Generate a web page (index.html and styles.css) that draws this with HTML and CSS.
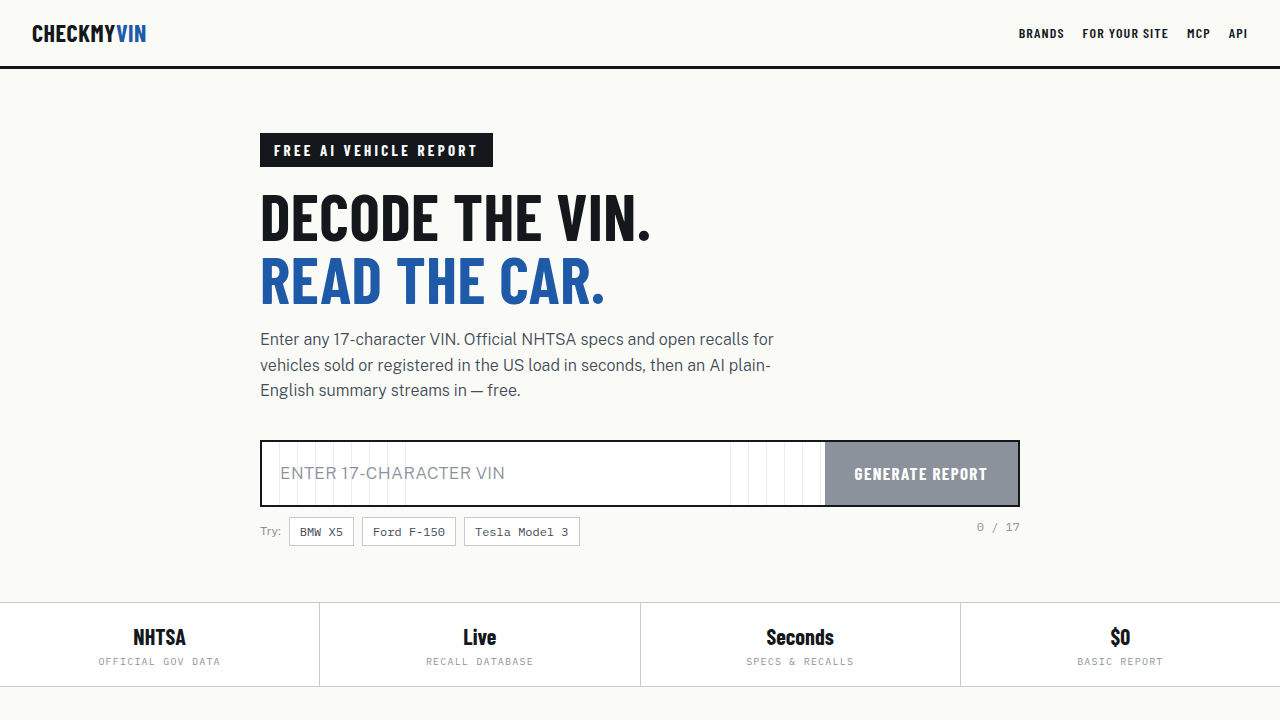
FILE: index.html
```html
<!DOCTYPE html>
<html lang="en">
<head>
    <meta charset="UTF-8">
    <meta name="viewport" content="width=device-width, initial-scale=1.0">
    <title>CheckMyVIN - Free AI Vehicle Report</title>
    <link rel="stylesheet" href="styles.css">
</head>
<body>
    <header class="site-header">
        <a class="logo" href="#">CHECKMY<span class="accent">VIN</span></a>
        <nav class="site-nav">
            <a href="#brands">Brands</a>
            <a href="#widget">For your site</a>
            <a href="#mcp">MCP</a>
            <a href="#api">API</a>
        </nav>
    </header>

    <main>
        <section class="hero">
            <div class="tag">Free AI Vehicle Report</div>
            <h1>Decode the VIN.<br><span class="accent">Read the car.</span></h1>
            <p class="lead">Enter any 17-character VIN. Official NHTSA specs and open recalls for vehicles sold or registered in the US load in seconds, then an AI plain-English summary streams in — free.</p>

            <form class="vin-form">
                <input class="vin-input" type="text" maxlength="17" placeholder="ENTER 17-CHARACTER VIN" aria-label="VIN" autocomplete="off" spellcheck="false">
                <button class="vin-submit" type="submit" disabled>Generate Report</button>
            </form>

            <div class="vin-meta">
                <div class="examples">
                    <span class="examples-label">Try:</span>
                    <button class="chip" type="button">BMW X5</button>
                    <button class="chip" type="button">Ford F-150</button>
                    <button class="chip" type="button">Tesla Model 3</button>
                </div>
                <div class="counter">0 / 17</div>
            </div>
        </section>

        <section class="stats">
            <div class="stat">
                <div class="stat-value">NHTSA</div>
                <div class="stat-label">Official gov data</div>
            </div>
            <div class="stat">
                <div class="stat-value">Live</div>
                <div class="stat-label">Recall database</div>
            </div>
            <div class="stat">
                <div class="stat-value">Seconds</div>
                <div class="stat-label">Specs &amp; recalls</div>
            </div>
            <div class="stat">
                <div class="stat-value">$0</div>
                <div class="stat-label">Basic report</div>
            </div>
        </section>
    </main>
</body>
</html>
```
FILE: styles.css
```css
:root {
    --ink: #14181c;
    --blue: #1e5aa8;
    --paper: #fafbf7;
    --text: #444b57;
    --muted: #8c929c;
    --line: #c8cad0;
    --display: "Barlow Condensed", "Roboto Condensed", "Liberation Sans Narrow", sans-serif;
    --body: "Public Sans", Inter, "Liberation Sans", sans-serif;
    --mono: "IBM Plex Mono", "Liberation Mono", monospace;
}

* {
    box-sizing: border-box;
    margin: 0;
}

body {
    background: var(--paper);
    color: var(--ink);
    font-family: var(--body);
}

a {
    color: inherit;
    text-decoration: none;
}

.accent {
    color: var(--blue);
}

.site-header {
    display: flex;
    align-items: center;
    justify-content: space-between;
    padding: 18px 32px;
    border-bottom: 3px solid var(--ink);
}

.logo {
    font: 700 24px/30px var(--display);
    letter-spacing: 0.02em;
}

.site-nav {
    display: flex;
    gap: 18px;
    font: 600 14px/20px var(--display);
    letter-spacing: 0.08em;
    text-transform: uppercase;
}

.hero {
    max-width: 808px;
    margin: 0 auto;
    padding: 64px 24px 56px;
}

.tag {
    display: inline-block;
    padding: 6px 14px;
    background: var(--ink);
    color: #fff;
    font: 700 15px/22px var(--display);
    letter-spacing: 0.22em;
    text-transform: uppercase;
    vertical-align: top;
}

h1 {
    margin: 17px 0;
    font: 700 64px/63px var(--display);
    letter-spacing: 0.008em;
    text-transform: uppercase;
}

.lead {
    max-width: 520px;
    margin-bottom: 36px;
    color: var(--text);
    font-size: 16px;
    font-weight: 300;
    line-height: 1.6;
}

.vin-form {
    display: flex;
    border: 2px solid var(--ink);
}

.vin-input {
    flex: 1;
    min-width: 0;
    padding: 18px;
    border: 0;
    outline: 0;
    background:
        repeating-linear-gradient(to right, transparent 0 17px, #ebecec 17px 18px) left / 144px 100% no-repeat,
        repeating-linear-gradient(to right, #ebecec 0 1px, transparent 1px 18px) right / 95px 100% no-repeat,
        #fff;
    color: var(--ink);
    font: 300 17px/27px var(--body);
    letter-spacing: 0.02em;
    text-transform: uppercase;
}

.vin-input::placeholder {
    color: var(--muted);
}

.vin-submit {
    padding: 0 30px;
    border: 0;
    background: var(--muted);
    color: #fff;
    font: 700 17px/24px var(--display);
    letter-spacing: 0.08em;
    text-transform: uppercase;
}

.vin-meta {
    display: flex;
    justify-content: space-between;
    margin-top: 10px;
}

.examples {
    display: flex;
    align-items: center;
    gap: 8px;
}

.examples-label {
    color: var(--muted);
    font-size: 12px;
}

.chip {
    padding: 5px 10px;
    border: 1px solid var(--line);
    background: #fff;
    color: var(--text);
    font: 12px/17px var(--mono);
    cursor: pointer;
}

.counter {
    color: var(--muted);
    font: 12px/20px var(--mono);
}

.stats {
    display: grid;
    grid-template-columns: repeat(4, 1fr);
    gap: 1px;
    border-top: 1px solid var(--line);
    border-bottom: 1px solid var(--line);
    background: var(--line);
}

.stat {
    padding: 18px 16px;
    background: #fff;
    text-align: center;
}

.stat-value {
    font: 700 22px/31px var(--display);
}

.stat-label {
    margin-top: 4px;
    color: var(--muted);
    font: 10px/12px var(--mono);
    letter-spacing: 0.12em;
    text-transform: uppercase;
}
```
